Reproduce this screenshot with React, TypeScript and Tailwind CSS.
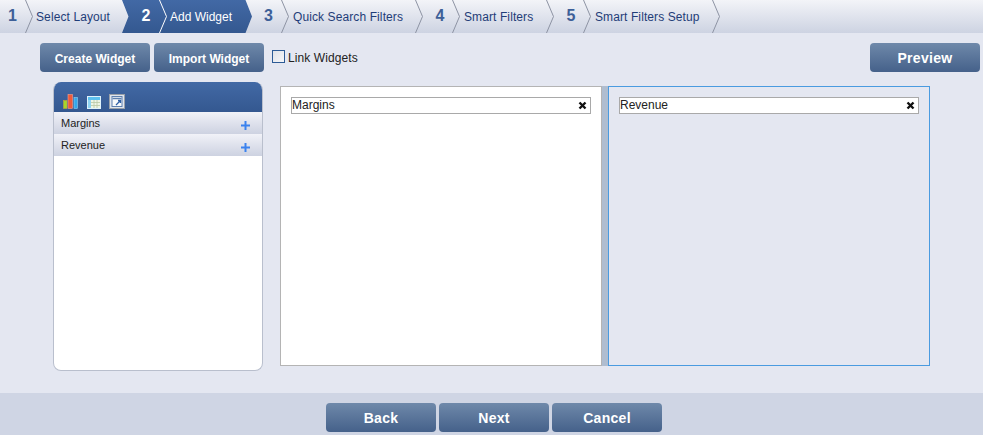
import React from "react";

const btn =
  "h-[29px] w-[110px] rounded-[4px] bg-gradient-to-b from-[#6f89aa] to-[#45618a] text-white font-bold flex items-center justify-center pt-[2px]";

const Chevron: React.FC<{ color?: string }> = ({ color = "#8d93a3" }) => (
  <svg width="8" height="33" viewBox="0 0 8 33" className="shrink-0">
    <path d="M0.5 0 L7.5 16.5 L0.5 33" fill="none" stroke={color} strokeWidth="1" />
  </svg>
);

const Step: React.FC<{
  num: number;
  label: string;
  numCls: string;
  labelCls: string;
  end?: boolean;
}> = ({ num, label, numCls, labelCls, end }) => (
  <>
    <div className={`${numCls} text-center text-[16px] font-bold text-[#3d5f98] leading-[32px]`}>{num}</div>
    <Chevron />
    <div className={`${labelCls} text-[12px] tracking-[0.1px] text-[#1f3d78] leading-[35px] whitespace-nowrap`}>{label}</div>
    {end && <Chevron />}
  </>
);

const BarsIcon = () => (
  <svg width="16" height="15" viewBox="0 0 16 15">
    <rect x="0.5" y="6.500" width="3.500" height="8" fill="#a4d82a" stroke="#c9a23a" strokeWidth="0.6" />
    <rect x="5" y="0.500" width="4.500" height="14" fill="#f05a3a" stroke="#f0a090" strokeWidth="0.6" />
    <rect x="11" y="3.500" width="3.500" height="11" fill="#35a8ea" stroke="#8fcdf0" strokeWidth="0.6" />
  </svg>
);

const TableIcon = () => (
  <svg width="14" height="13" viewBox="0 0 14 13">
    <rect x="0.5" y="0.5" width="13" height="12" fill="#eef5e6" stroke="#dff2fb" />
    <rect x="1" y="1" width="12" height="3" fill="#5cc0ee" />
    <rect x="1" y="4" width="3" height="8" fill="#8fd4f2" />
    <path d="M4 6.500h9M4 9.500h9M7 4v8M10 4v8" stroke="#b9c9a6" strokeWidth="0.8" fill="none" />
  </svg>
);

const ImageIcon = () => (
  <svg width="16" height="15" viewBox="0 0 16 15">
    <rect x="0.5" y="0.5" width="15" height="14" fill="#dfe5ee" stroke="#9aa0a8" />
    <rect x="3" y="2.500" width="10" height="10" fill="#f7f9fb" stroke="#5d7fae" />
    <path d="M3.500 4.500h9" stroke="#5d7fae" strokeWidth="1.400" />
    <path d="M7 11 L11.500 6.500 M9 6.500 H11.500 V9" stroke="#2f5fa5" strokeWidth="1.300" fill="none" />
  </svg>
);

const Row: React.FC<{ label: string }> = ({ label }) => (
  <div className="h-[22px] flex justify-between bg-gradient-to-b from-[#f1f2f8] to-[#cdd2e1] pl-[7px] pr-[12px]">
    <span className="text-[11px] leading-[22px] text-[#222]">{label}</span>
    <svg width="9" height="9" viewBox="0 0 9 9" className="mt-[9px]">
      <path d="M4.500 0v9M0 4.500h9" stroke="#3b82ee" strokeWidth="2" />
    </svg>
  </div>
);

const Field: React.FC<{ label: string }> = ({ label }) => (
  <div className="h-[17px] bg-white border border-[#a9a9a9] flex items-center justify-between pr-[3px]">
    <span className="text-[12px] leading-[15px] text-[#222]">{label}</span>
    <svg width="9" height="9" viewBox="0 0 9 9">
      <path d="M1.500 1.500l6 6M7.500 1.500l-6 6" stroke="#111" strokeWidth="2.400" />
    </svg>
  </div>
);

export default function App() {
  return (
    <div
      className="w-[983px] h-[435px] overflow-hidden flex flex-col bg-[#e4e7f1]"
      style={{ fontFamily: '"Liberation Sans", Arial, sans-serif' }}
    >
      {/* wizard steps */}
      <div className="h-[33px] flex bg-gradient-to-b from-[#f3f4f8] to-[#cdd3e2]">
        <Step num={1} label="Select Layout" numCls="w-[25px]" labelCls="w-[89px] pl-[3px]" />
        <div className="w-[130px] flex bg-gradient-to-b from-[#4269a5] to-[#345890] [clip-path:polygon(0_0,95%_0,100%_50%,95%_100%,0_100%,5%_50%)]">
          <div className="w-[37px] pl-[11px] text-center text-[16px] font-bold text-white leading-[32px]">2</div>
          <Chevron color="#ffffff" />
          <div className="pl-[3px] text-[12px] text-white leading-[35px] whitespace-nowrap">Add Widget</div>
        </div>
        <Step num={3} label="Quick Search Filters" numCls="w-[29px] pl-[4px]" labelCls="w-[126px] pl-[4px]" end />
        <Step num={4} label="Smart Filters" numCls="w-[29px] pl-[5px]" labelCls="w-[86px] pl-[4px]" end />
        <Step num={5} label="Smart Filters Setup" numCls="w-[29px] pl-[5px]" labelCls="w-[121px] pl-[4px]" end />
      </div>

      {/* toolbar */}
      <div className="flex items-center pt-[10px] pl-[40px] pr-[3px]">
        <button className={`${btn} text-[12px]`}>Create Widget</button>
        <button className={`${btn} text-[12px] ml-[4px]`}>Import Widget</button>
        <div className="ml-[8px] w-[13px] h-[13px] border border-[#2c5b96] bg-gradient-to-br from-[#dfe2e8] to-[#f5f6f9] -mt-[3px]" />
        <span className="ml-[3px] text-[12px] tracking-[0.1px] text-[#222]">Link Widgets</span>
        <button className={`${btn} text-[14px] tracking-[0.3px] ml-auto`}>Preview</button>
      </div>

      {/* widgets */}
      <div className="flex items-start pl-[53px] pt-[10px]">
        <div className="w-[210px] h-[289px] rounded-[8px] bg-white border border-[#b9bfcd] border-t-0 overflow-hidden">
          <div className="h-[30px] -mx-px bg-gradient-to-b from-[#4269a5] to-[#345890] flex items-end gap-[8px] pl-[10px] pb-[3px]">
            <BarsIcon />
            <TableIcon />
            <ImageIcon />
          </div>
          <Row label="Margins" />
          <Row label="Revenue" />
        </div>
        <div className="ml-[17px] mt-[4px] flex h-[280px]">
          <div className="w-[322px] bg-white border border-[#b4b4b4] pt-[10px] pl-[10px] pr-[10px]">
            <Field label="Margins" />
          </div>
          <div className="w-[6px] bg-[#afbdd0]" />
          <div className="w-[322px] border border-[#4a9be0] pt-[10px] pl-[10px] pr-[10px]">
            <Field label="Revenue" />
          </div>
        </div>
      </div>

      {/* footer */}
      <div className="mt-auto h-[42px] bg-[#cfd5e4] flex justify-center gap-[3px] pt-[10px] pl-[5px]">
        <button className={`${btn} text-[14px] tracking-[0.3px]`}>Back</button>
        <button className={`${btn} text-[14px] tracking-[0.3px]`}>Next</button>
        <button className={`${btn} text-[14px] tracking-[0.3px]`}>Cancel</button>
      </div>
    </div>
  );
}
